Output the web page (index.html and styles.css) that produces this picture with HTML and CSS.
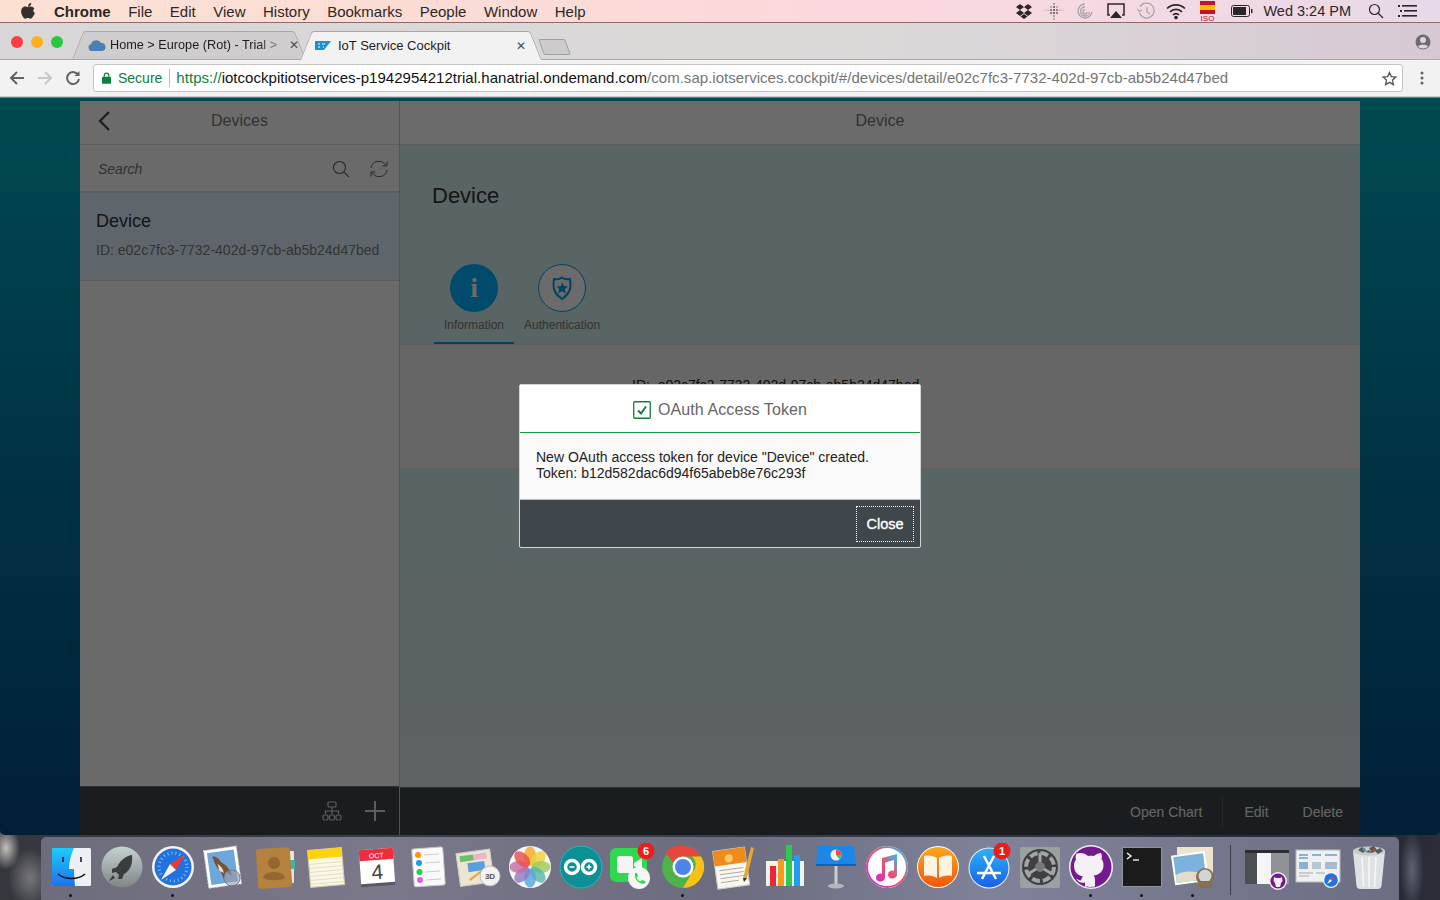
FILE: index.html
```html
<!doctype html>
<html>
  <head>
    <title>IoT Service Cockpit</title>
    <meta name="viewport" content="width=device-width,initial-scale=1.0"/>
    <meta charset="utf-8"/>
    <link rel="stylesheet" href="styles.css">
  </head>
  <body>
    <!-- mac menu bar -->
    <div class="menubar">
      <svg class="apple" width="14" height="16" viewBox="0 0 14 16"><path d="M10.2 0c.1 1-.3 1.900-.8 2.600-.6.700-1.500 1.200-2.400 1.100-.1-.9.300-1.900.8-2.500C8.400.5 9.400 0 10.200 0zM13.400 5.500c-1.600 1-1.400 3.500.5 4.400-.5 1.300-1 2.400-1.900 3.700-.7 1-1.500 2.100-2.600 2.100-1 0-1.300-.6-2.500-.6s-1.600.6-2.500.6c-1.100 0-1.800-1-2.500-2C.2 11.200-.7 7.400 1 5.200c.8-1.100 2-1.700 3.100-1.700 1.200 0 1.900.7 2.900.7.900 0 1.500-.7 2.900-.7 1.300 0 2.600.7 3.500 2z" fill="#332f2f"/></svg>
      <span class="menu-item appname">Chrome</span>
      <span class="menu-item">File</span>
      <span class="menu-item">Edit</span>
      <span class="menu-item">View</span>
      <span class="menu-item">History</span>
      <span class="menu-item">Bookmarks</span>
      <span class="menu-item">People</span>
      <span class="menu-item">Window</span>
      <span class="menu-item">Help</span>
      <div class="extras">
        <svg class="extra" viewBox="0 0 30 18"><path d="M11 2l4 3-4 3-4-3zM19 2l4 3-4 3-4-3zM11 8l4 3-4 3-4-3zM19 8l4 3-4 3-4-3zM15 12l3.500 2.400-3.500 2.600-3.500-2.600z" fill="#2a2728"/></svg>
        <svg class="extra" viewBox="0 0 30 18" fill="#555"><circle cx="15" cy="2" r=".8"/><circle cx="15" cy="5" r="1"/><circle cx="15" cy="8" r="1.100"/><circle cx="15" cy="11" r="1.100"/><circle cx="15" cy="14" r=".8"/><circle cx="15" cy="17" r=".7"/><circle cx="12" cy="5" r=".7"/><circle cx="12" cy="8" r=".9"/><circle cx="12" cy="11" r=".9"/><circle cx="18" cy="5" r=".7"/><circle cx="18" cy="8" r=".9"/><circle cx="18" cy="11" r=".9"/><circle cx="9" cy="8" r=".6"/><circle cx="21" cy="8" r=".6"/><circle cx="6" cy="8" r=".4"/><circle cx="24" cy="8" r=".4"/></svg>
        <svg class="extra spiral" viewBox="0 0 30 18" fill="none" stroke="#a9a2a8" stroke-width="1.300"><path d="M16 2a7 7 0 1 0 7 8"/><path d="M16 5a4.500 4.500 0 1 0 4.500 5"/><path d="M16 8a2 2 0 1 0 2 2"/></svg>
        <svg class="extra" viewBox="0 0 30 18"><path d="M9 13H7V2h16v11h-2" fill="none" stroke="#2a2728" stroke-width="1.500"/><path d="M15 9l6 7H9z" fill="#2a2728"/></svg>
        <svg class="extra" viewBox="0 0 30 18" fill="none" stroke="#a9a2a8" stroke-width="1.200"><path d="M9 5a7.500 7.500 0 1 1-.5 6"/><path d="M16 5v5l3 2"/><path d="M6.500 7l2 2.500L11 8" /></svg>
        <svg class="extra" viewBox="0 0 30 18" fill="none" stroke="#2a2728" stroke-width="1.700"><path d="M6 6.500a13 13 0 0 1 18 0"/><path d="M9 9.800a8.500 8.500 0 0 1 12 0"/><path d="M12 13a4 4 0 0 1 6 0"/><circle cx="15" cy="15.500" r="1" fill="#2a2728"/></svg>
        <svg class="extra flag" viewBox="0 0 30 22"><rect x="8" y="1" width="15" height="4" fill="#c8102e"/><rect x="8" y="5" width="15" height="5" fill="#f1bf00"/><rect x="8" y="10" width="15" height="4" fill="#c8102e"/><text x="15.500" y="21" class="flag-text">ISO</text></svg>
        <svg class="battery" width="22" height="12" viewBox="0 0 22 12"><rect x=".5" y=".5" width="18" height="11" rx="2" fill="none" stroke="#2a2728"/><rect x="2" y="2" width="13" height="8" fill="#2a2728"/><rect x="20" y="4" width="1.500" height="4" fill="#2a2728"/></svg>
        <span class="clock">Wed 3:24 PM</span>
        <svg class="spot" width="16" height="16" viewBox="0 0 16 16" fill="none" stroke="#2a2728" stroke-width="1.200"><circle cx="6.500" cy="6.500" r="5"/><path d="M10 10l5 5"/></svg>
        <svg class="notif" width="20" height="12" viewBox="0 0 20 12" fill="#2a2728"><rect x="0" y="0" width="2" height="2"/><rect x="4" y="0" width="15" height="1.600"/><rect x="2" y="5" width="2" height="2"/><rect x="6" y="5" width="13" height="1.600"/><rect x="0" y="10" width="2" height="2"/><rect x="4" y="10" width="15" height="1.600"/></svg>
      </div>
    </div>

    <div class="browser">
      <div class="tabstrip">
        <div class="lights">
          <span class="light red"></span><span class="light yellow"></span><span class="light green"></span>
        </div>
        <div class="tab">
          <svg width="18" height="12" viewBox="0 0 18 12"><path d="M4 12a3.500 3.500 0 0 1-.8-6.900A4 4 0 0 1 8 1.500a4.500 4.500 0 0 1 5 2.500 4 4 0 0 1 1 8z" fill="#4a7fb4"/></svg>
          <span class="tab-title fade">Home &gt; Europe (Rot) - Trial &gt;</span>
          <span class="tab-close">&#x2715;</span>
        </div>
        <div class="tab active">
          <svg width="16" height="9" viewBox="0 0 16 9"><path d="M0 0h16L9 9H0z" fill="#1d8fd8"/><path d="M3 3h2M3 6h2M7 3h3M8 6h1" stroke="#fff" stroke-width="1"/></svg>
          <span class="tab-title">IoT Service Cockpit</span>
          <span class="tab-close">&#x2715;</span>
        </div>
        <div class="newtab"></div>
        <svg class="profile" width="16" height="16" viewBox="0 0 16 16"><circle cx="8" cy="8" r="7.500" fill="#6f6b70"/><circle cx="8" cy="6" r="3" fill="#dcd6da"/><path d="M3 12.500c1-2.500 9-2.500 10 0-1 1-2.500 2-5 2s-4-1-5-2z" fill="#dcd6da"/></svg>
      </div>

      <div class="toolbar">
        <svg class="nav" width="16" height="14" viewBox="0 0 16 14" fill="none" stroke="#5f6368" stroke-width="2"><path d="M15 7H2M8 1L2 7l6 6"/></svg>
        <svg class="nav" width="16" height="14" viewBox="0 0 16 14" fill="none" stroke="#c9c9c9" stroke-width="2"><path d="M1 7h13M8 1l6 6-6 6"/></svg>
        <svg class="nav" width="16" height="16" viewBox="0 0 16 16" fill="none" stroke="#5f6368" stroke-width="2"><path d="M13.500 5.500A6 6 0 1 0 14 9"/><path d="M14.500 1v5h-5z" fill="#5f6368" stroke="none"/></svg>
        <div class="urlbar">
          <svg width="9" height="12" viewBox="0 0 10 13"><path d="M2.500 5V3.500a2.500 2.500 0 0 1 5 0V5" fill="none" stroke="#0b8043" stroke-width="1.400"/><rect y="5" width="10" height="8" rx="1" fill="#0b8043"/></svg>
          <span class="secure">Secure</span>
          <span class="url-sep"></span>
          <span class="url"><span class="scheme">https://</span><span class="host">iotcockpitiotservices-p1942954212trial.hanatrial.ondemand.com</span>/com.sap.iotservices.cockpit/#/devices/detail/e02c7fc3-7732-402d-97cb-ab5b24d47bed</span>
          <svg class="star" width="15" height="15" viewBox="0 0 16 16"><path d="M8 1.500l2 4.500 4.800.5-3.600 3.200 1 4.800L8 12.100l-4.200 2.400 1-4.800L1.200 6.500 6 6z" fill="none" stroke="#555" stroke-width="1.400"/></svg>
        </div>
        <svg class="dots" width="4" height="14" viewBox="0 0 4 14" fill="#5f6368"><circle cx="2" cy="2" r="1.500"/><circle cx="2" cy="7" r="1.500"/><circle cx="2" cy="12" r="1.500"/></svg>
      </div>

      <!-- web page -->
      <div class="page">
        <div class="app">
          <div class="master">
            <div class="bar-head">
              <svg class="back" width="12" height="20" viewBox="0 0 12 20" fill="none" stroke="#444" stroke-width="2.200"><path d="M11 1L2 10l9 9"/></svg>
              <span>Devices</span>
            </div>
            <div class="searchbar">
              <span class="search-text">Search</span>
              <svg width="18" height="18" viewBox="0 0 18 18" fill="none" stroke="#666" stroke-width="1.100"><circle cx="7.500" cy="7.500" r="6"/><path d="M12 12l5 5"/></svg>
              <svg width="20" height="20" viewBox="0 0 20 20" fill="none" stroke="#666" stroke-width="1"><path d="M2 9a8 8 0 0 1 14-4l2 2"/><path d="M18 2.500V7h-4.500"/><path d="M18 11a8 8 0 0 1-14 4l-2-2"/><path d="M2 17.500V13h4.500"/></svg>
            </div>
            <div class="list-item">
              <div class="item-title">Device</div>
              <div class="item-id">ID: e02c7fc3-7732-402d-97cb-ab5b24d47bed</div>
            </div>
            <div class="grow"></div>
            <div class="foot master-foot">
              <svg width="20" height="20" viewBox="0 0 20 20" fill="none" stroke="#dcdcdc" stroke-width="1.200"><rect x="6" y="1" width="8" height="5" rx="1"/><path d="M10 6v4M3.500 13v-3h13v3M10 10v3"/><rect x="1" y="14" width="5" height="5" rx="1.500"/><rect x="7.500" y="14" width="5" height="5" rx="1.500"/><rect x="14" y="14" width="5" height="5" rx="1.500"/></svg>
              <svg width="20" height="20" viewBox="0 0 20 20" fill="none" stroke="#dcdcdc" stroke-width="2"><path d="M10 0v20M0 10h20"/></svg>
            </div>
          </div>
          <div class="detail">
            <div class="bar-head"><span>Device</span></div>
            <div class="object-head">
              <h1 class="object-title">Device</h1>
              <div class="tabs">
                <div class="icon-tab selected">
                  <span class="tab-circle filled">i</span>
                  <span class="tab-label">Information</span>
                </div>
                <div class="icon-tab">
                  <span class="tab-circle">
                    <svg width="24" height="25" viewBox="0 0 24 25"><path d="M12 1.500c2 1.500 5 2 8 1.500 1 6 2 13-8 20C2 16 3 9 4 3c3 .5 6 0 8-1.500z" fill="none" stroke="#00a0e6" stroke-width="2"/><path d="M12 6l1.800 4 4.200.4-3.200 2.800 1 4.200-3.800-2.200-3.800 2.200 1-4.200L7 10.400l4.200-.4z" fill="#00a0e6"/></svg>
                  </span>
                  <span class="tab-label">Authentication</span>
                </div>
              </div>
            </div>
            <div class="form-band">
              <div class="form-row">ID:&nbsp; e02c7fc3-7732-402d-97cb-ab5b24d47bed</div>
            </div>
            <div class="detail-rest"></div>
            <div class="foot detail-foot">
              <span class="foot-btn">Open Chart</span>
              <span class="foot-sep"></span>
              <span class="foot-btn">Edit</span>
              <span class="foot-btn last">Delete</span>
            </div>
          </div>
        </div>

        <div class="blocklayer">
          <div class="dialog">
            <div class="dialog-head">
              <svg width="18" height="18" viewBox="0 0 18 18"><rect x=".75" y=".75" width="16.500" height="16.500" rx="1" fill="#fff" stroke="#107e3e" stroke-width="1.300"/><path d="M5 9.500l3 3 5-7" fill="none" stroke="#107e3e" stroke-width="2"/></svg>
              <span>OAuth Access Token</span>
            </div>
            <div class="dialog-body">New OAuth access token for device "Device" created.<br>Token: b12d582dac6d94f65abeb8e76c293f</div>
            <div class="dialog-foot"><button class="dialog-btn">Close</button></div>
          </div>
        </div>
      </div>
    </div>

    <!-- dock -->
    <div class="dock">
      <div class="dock-item running">
        <svg viewBox="0 0 48 48"><defs><linearGradient id="fb" x1="0" y1="0" x2="0" y2="1"><stop offset="0" stop-color="#1ecbfb"/><stop offset="1" stop-color="#1a73ee"/></linearGradient></defs><rect x="5" y="5" width="39" height="38" rx="1.500" fill="#eef1f4"/><path d="M6.500 5H27c-3 7-5 13-5 21h5c0 6 .500 11 1 17H6.500A1.500 1.500 0 0 1 5 41.500v-35A1.500 1.500 0 0 1 6.500 5z" fill="url(#fb)"/><path d="M16 14v5M34 14v5" stroke="#111" stroke-width="1.500"/><path d="M11 31c7 6 20 6 27 0" fill="none" stroke="#111" stroke-width="1.500"/></svg><span class="dot"></span>
      </div>
      <div class="dock-item">
        <svg viewBox="0 0 48 48"><defs><linearGradient id="lp" x1="0" y1="0" x2="0" y2="1"><stop offset="0" stop-color="#c6d2d2"/><stop offset="1" stop-color="#7f8584"/></linearGradient></defs><circle cx="24" cy="24" r="20.500" fill="url(#lp)"/><path d="M34 12c-7 1-12 6-15 12l-5 2 0 4 4-1 3 3-1 4 4 0 2-5c6-3 9-10 8-19z" fill="#3a3d3e"/><path d="M15 32l-4 6 6-3z" fill="#3a3d3e"/></svg><span class="dot"></span>
      </div>
      <div class="dock-item running">
        <svg viewBox="0 0 48 48"><circle cx="24" cy="24" r="21" fill="#f3f5f7"/><circle cx="24" cy="24" r="18.500" fill="#1f72e0"/><circle cx="24" cy="24" r="14" fill="none" stroke="#8cc0f2" stroke-dasharray="1 3" stroke-width="3"/><path d="M36 11L21 21l6 6z" fill="#ee3a32"/><path d="M12 37l15-10-6-6z" fill="#f4f4f4"/></svg><span class="dot"></span>
      </div>
      <div class="dock-item">
        <svg viewBox="0 0 48 48"><g transform="rotate(-8 24 24)"><rect x="6" y="5" width="33" height="38" fill="#fff" stroke="#ccc" stroke-dasharray="2 1.500"/><rect x="9" y="8" width="27" height="32" fill="#6ea7dc"/><path d="M14 12c4 0 6 3 8 7 4 3 8 8 9 15l-6-5-3 7-2-9c-4-3-5-9-6-15z" fill="#7b5232"/><path d="M18 20c3 3 5 6 5 10l-4-3z" fill="#e9dfcf"/></g><circle cx="32" cy="35" r="8" fill="#9a9ba8" fill-opacity=".6" stroke="#777a88"/></svg><span class="dot"></span>
      </div>
      <div class="dock-item">
        <svg viewBox="0 0 48 48"><rect x="38" y="8" width="5" height="32" rx="1" fill="#e8e6d8"/><rect x="39" y="17" width="5" height="9" fill="#3fb5a8"/><rect x="6" y="5" width="34" height="40" rx="3" fill="#b5813f" transform="rotate(-4 24 24)"/><circle cx="23" cy="20" r="6" fill="#946731"/><path d="M12 35c1-8 21-8 22 0-6 3-16 3-22 0z" fill="#946731"/></svg><span class="dot"></span>
      </div>
      <div class="dock-item">
        <svg viewBox="0 0 48 48"><g transform="rotate(-5 24 24)"><rect x="7" y="6" width="34" height="37" fill="#fbf7e3" stroke="#cfc9a8"/><rect x="7" y="6" width="34" height="9" fill="#fdd20e"/><path d="M7 20h34M7 24h34M7 28h34M7 32h34M7 36h34M7 40h34" stroke="#dcd7c0" stroke-width=".8"/></g></svg><span class="dot"></span>
      </div>
      <div class="dock-item">
        <svg viewBox="0 0 48 48"><g transform="rotate(-4 24 24)"><rect x="7" y="7" width="34" height="36" fill="#555b60"/><rect x="7" y="6" width="34" height="34" fill="#fff"/><rect x="7" y="6" width="34" height="11" fill="#ec2e3c"/><text x="24" y="15" class="cal-month">OCT</text><text x="24" y="36" class="cal-day">4</text></g></svg><span class="dot"></span>
      </div>
      <div class="dock-item">
        <svg viewBox="0 0 48 48"><rect x="9" y="5" width="31" height="38" rx="2" fill="#fafafa" stroke="#c8c8c8" transform="rotate(-4 24 24)"/><circle cx="14" cy="12" r="3" fill="#ff9500"/><circle cx="15" cy="20" r="3" fill="#1a9cf0"/><circle cx="15.500" cy="29" r="3" fill="#2ecc40"/><circle cx="16" cy="37" r="3" fill="#e05de0"/><path d="M20 12l15-1M21 20l15-1M21 29l15-1M22 37l15-1" stroke="#ccc"/></svg><span class="dot"></span>
      </div>
      <div class="dock-item">
        <svg viewBox="0 0 48 48"><g transform="rotate(-8 22 24)"><rect x="3" y="8" width="34" height="33" fill="#ece5d2" stroke="#ccc"/><rect x="6" y="11" width="14" height="6" fill="#6cc06a"/><rect x="20" y="11" width="13" height="6" fill="#e9b7c5"/><rect x="13" y="19" width="17" height="9" fill="#5a9fdc"/><path d="M13 36l14-8" stroke="#e8a23a" stroke-width="2"/></g><circle cx="35" cy="33" r="10" fill="#f2f2f0" stroke="#bbb"/><text x="35" y="36" class="maps-3d">3D</text></svg><span class="dot"></span>
      </div>
      <div class="dock-item">
        <svg viewBox="0 0 48 48"><circle cx="24" cy="24" r="21" fill="#f7f7f7"/><g fill-opacity=".82"><ellipse cx="24" cy="13" rx="6" ry="9.500" fill="#f7a823"/><ellipse cx="24" cy="13" rx="6" ry="9.500" fill="#ecd334" transform="rotate(45 24 24)"/><ellipse cx="24" cy="13" rx="6" ry="9.500" fill="#9bcb5a" transform="rotate(90 24 24)"/><ellipse cx="24" cy="13" rx="6" ry="9.500" fill="#5bb6a8" transform="rotate(135 24 24)"/><ellipse cx="24" cy="13" rx="6" ry="9.500" fill="#56a6e0" transform="rotate(180 24 24)"/><ellipse cx="24" cy="13" rx="6" ry="9.500" fill="#8e7ac6" transform="rotate(225 24 24)"/><ellipse cx="24" cy="13" rx="6" ry="9.500" fill="#c66ea6" transform="rotate(270 24 24)"/><ellipse cx="24" cy="13" rx="6" ry="9.500" fill="#ea4d4d" transform="rotate(315 24 24)"/></g></svg><span class="dot"></span>
      </div>
      <div class="dock-item">
        <svg viewBox="0 0 48 48"><circle cx="24" cy="24" r="21.500" fill="#0d8f96"/><circle cx="24" cy="24" r="21" fill="none" stroke="#3db0b5"/><g fill="none" stroke="#fff" stroke-width="3.500"><circle cx="15" cy="24" r="6.500"/><circle cx="32" cy="24" r="6.500"/></g><path d="M12.500 24h5M29.500 24h5M32 21.500v5" stroke="#fff" stroke-width="1.500"/></svg><span class="dot"></span>
      </div>
      <div class="dock-item">
        <svg viewBox="0 0 48 48"><rect x="2" y="5" width="37" height="34" rx="6" fill="#2fd94f"/><rect x="9" y="13" width="16" height="17" rx="3" fill="#f4f4f4"/><path d="M26 20l8-5v13l-8-5z" fill="#f4f4f4"/><circle cx="31" cy="35" r="11" fill="#f6f6f6"/><path d="M27 29l2 1 1 3-1.500 1.500c.8 2 2 3 4 4l1.500-1.500 3 1 .5 2c-4 3-13-3-10-11z" fill="#2fd94f"/><circle cx="38" cy="8" r="8.500" fill="#ef1c1c"/><text x="38" y="12" class="badge">6</text></svg><span class="dot"></span>
      </div>
      <div class="dock-item running">
        <svg viewBox="0 0 48 48"><circle cx="24" cy="24" r="21" fill="#4db34a"/><path d="M24 3a21 21 0 0 1 18.200 10.500H24a10.500 10.500 0 0 0-9.500 6L6 9A21 21 0 0 1 24 3z" fill="#e8453c"/><path d="M42.200 13.500A21 21 0 0 1 24 45l9-15.500a10.500 10.500 0 0 0 0-16z" fill="#fbc116"/><circle cx="24" cy="24" r="10.500" fill="#fff"/><circle cx="24" cy="24" r="8" fill="#4a86e8"/></svg><span class="dot"></span>
      </div>
      <div class="dock-item">
        <svg viewBox="0 0 48 48"><g transform="rotate(-8 22 24)"><rect x="5" y="6" width="32" height="38" fill="#fbf7ee" stroke="#ccc"/><rect x="5" y="6" width="32" height="15" fill="#f08a1d"/><path d="M9 26h24M9 30h24M9 34h24M9 38h18" stroke="#aaa"/><circle cx="20" cy="15" r="4" fill="#f7c969"/></g><path d="M41 4l3 1-7 30-3 4-1-4z" fill="#e7a72d"/><path d="M33 35l1 4 3-4z" fill="#333"/></svg><span class="dot"></span>
      </div>
      <div class="dock-item">
        <svg viewBox="0 0 48 48"><path d="M5 40h38v3H5z" fill="#bbb"/><rect x="5" y="18" width="38" height="25" fill="#f4f1e6"/><rect x="9" y="23" width="6" height="20" fill="#f0243c"/><rect x="17" y="16" width="6" height="27" fill="#f29b1d"/><rect x="25" y="2" width="6" height="41" fill="#2ccb4f"/><rect x="33" y="12" width="6" height="31" fill="#1d9ef0"/></svg><span class="dot"></span>
      </div>
      <div class="dock-item">
        <svg viewBox="0 0 48 48"><path d="M6 3h36l2 18H4z" fill="#1d87e8"/><path d="M4 21h40v2H4z" fill="#0f62b8"/><rect x="22.500" y="23" width="3" height="20" fill="#c7ced2"/><ellipse cx="24" cy="43" rx="8" ry="2.500" fill="#aeb8bd"/><circle cx="24" cy="12" r="5.500" fill="#f5f5f5"/><path d="M24 12V6.500a5.500 5.500 0 0 1 5.500 5.500z" fill="#ef4f48"/><path d="M24 12h5.500a5.500 5.500 0 0 1-2 4.200z" fill="#4cc04f"/></svg><span class="dot"></span>
      </div>
      <div class="dock-item">
        <svg viewBox="0 0 48 48"><defs><linearGradient id="it" x1="0" y1="1" x2="1" y2="0"><stop offset="0" stop-color="#c52fd0"/><stop offset=".5" stop-color="#f54a6e"/><stop offset="1" stop-color="#28c4ea"/></linearGradient></defs><circle cx="24" cy="24" r="21" fill="#fff"/><circle cx="24" cy="24" r="20" fill="none" stroke="url(#it)" stroke-width="2"/><path d="M19 15l15-4v20.500a4.500 4 0 1 1-3-3.700V17l-9 2.500v15a4.500 4 0 1 1-3-3.700z" fill="url(#it)"/></svg><span class="dot"></span>
      </div>
      <div class="dock-item">
        <svg viewBox="0 0 48 48"><defs><linearGradient id="ib" x1="0" y1="0" x2="0" y2="1"><stop offset="0" stop-color="#fba71b"/><stop offset="1" stop-color="#f2560a"/></linearGradient></defs><circle cx="24" cy="24" r="21" fill="#fff"/><circle cx="24" cy="24" r="20" fill="url(#ib)"/><path d="M23 15c-3-2-8-3-13-2v20c5-1 10 0 13 2zM25 15c3-2 8-3 13-2v20c-5-1-10 0-13 2z" fill="#fdf3e3"/></svg><span class="dot"></span>
      </div>
      <div class="dock-item">
        <svg viewBox="0 0 48 48"><defs><linearGradient id="as" x1="0" y1="0" x2="0" y2="1"><stop offset="0" stop-color="#29b3f8"/><stop offset="1" stop-color="#1b5ee8"/></linearGradient></defs><circle cx="24" cy="25" r="20.500" fill="#f2f2f2"/><circle cx="24" cy="25" r="19.500" fill="url(#as)"/><path d="M17 36l12-23M31 36L19 13M12 30h24" stroke="#fff" stroke-width="2.500" fill="none"/><circle cx="37" cy="8" r="8.500" fill="#ef1c1c"/><text x="37" y="12" class="badge">1</text></svg><span class="dot"></span>
      </div>
      <div class="dock-item">
        <svg viewBox="0 0 48 48"><rect x="4" y="4" width="40" height="41" rx="2" fill="#9aa1a1"/><circle cx="24" cy="24" r="18" fill="#3f4042"/><circle cx="24" cy="24" r="14" fill="none" stroke="#a3a5a6" stroke-width="4" stroke-dasharray="8 3"/><circle cx="24" cy="24" r="5" fill="#77797a"/><path d="M24 10v9M12 31l8-5M36 31l-8-5" stroke="#a3a5a6" stroke-width="3"/></svg><span class="dot"></span>
      </div>
      <div class="dock-item running">
        <svg viewBox="0 0 48 48"><circle cx="24" cy="24" r="22" fill="#f2eef2"/><circle cx="24" cy="24" r="20.500" fill="#741a8e"/><path d="M14 10c2 0 5 1 7 3 2-.5 4-.5 6 0 2-2 5-3 7-3 1 2 1.200 4 .5 6 1.500 2 2 4 2 6 0 7-5 10-10 10.500 1 1 1.500 2.500 1.500 4v7c-1 .5-9 .5-10 0v-4c-4 1-7-.5-9-4 2 1 4 2 5 2 .5-2 1-3 2-4-5-1-9-4-9-11 0-2 .5-4 2-6-.7-2-.5-4 .5-6z" fill="#f5f0f5"/></svg><span class="dot"></span>
      </div>
      <div class="dock-item running">
        <svg viewBox="0 0 48 48"><rect x="4" y="4" width="40" height="40" fill="#8d9597"/><rect x="5" y="5" width="38" height="38" fill="#1b1b1b"/><path d="M9 10l4 3-4 3" fill="none" stroke="#fff" stroke-width="1.300"/><path d="M15 17h6" stroke="#fff" stroke-width="1.300"/></svg><span class="dot"></span>
      </div>
      <div class="dock-item running">
        <svg viewBox="0 0 48 48"><rect x="8" y="4" width="36" height="30" fill="#ece4cf"/><g transform="rotate(-8 22 26)"><rect x="4" y="10" width="34" height="30" fill="#fff"/><rect x="6" y="12" width="30" height="26" fill="#7cb2dc"/><path d="M6 30c8-4 18-2 30 3v5H6z" fill="#e3dccb"/></g><circle cx="36" cy="34" r="9" fill="#8a6f4f"/><circle cx="36" cy="33" r="6.500" fill="#cfd6d8"/><rect x="29" y="38" width="14" height="7" rx="2" fill="#8a6f4f"/></svg><span class="dot"></span>
      </div>
      <span class="dock-sep"></span>
      <div class="dock-item">
        <svg viewBox="0 0 48 48"><rect x="2" y="7" width="44" height="34" fill="#4b4f52"/><rect x="2" y="7" width="44" height="3" fill="#2c2f31"/><rect x="14" y="10" width="14" height="31" fill="#f5f5f5"/><rect x="28" y="10" width="18" height="31" fill="#8f9396"/><circle cx="35" cy="38" r="9" fill="#f2eef2"/><circle cx="35" cy="38" r="7.500" fill="#741a8e"/><path d="M31 34l2 1h4l2-1 .5 4-1.500 2-1 4h-4l-1-4-1.500-2z" fill="#f5f0f5"/></svg><span class="dot"></span>
      </div>
      <div class="dock-item">
        <svg viewBox="0 0 48 48"><rect x="2" y="7" width="44" height="32" fill="#eef0f2" stroke="#bbb"/><path d="M5 12h9M5 15h9M18 12h9M31 12h12" stroke="#6a9fc8" stroke-width="1.500"/><rect x="5" y="19" width="9" height="7" fill="#8cb1cf"/><rect x="18" y="19" width="9" height="7" fill="#b8c7d2"/><rect x="31" y="19" width="12" height="7" fill="#a9bccb"/><path d="M5 30h14M5 33h10M22 30h9" stroke="#a7a7a7"/><circle cx="37" cy="37" r="8" fill="#f4f5f7"/><circle cx="37" cy="37" r="6.800" fill="#1f72e0"/><path d="M41 33l-5 3 2 2z" fill="#ee3a32"/><path d="M33 41l5-3-2-2z" fill="#f4f4f4"/></svg><span class="dot"></span>
      </div>
      <div class="dock-item">
        <svg viewBox="0 0 48 48"><path d="M8 8h32l-3.500 35c-.3 2-2 3-3.500 3H15c-1.500 0-3.200-1-3.500-3z" fill="#dfe2e3"/><ellipse cx="24" cy="8" rx="16" ry="4.500" fill="#c9cccd"/><path d="M13 7l4-3 4 3-3 3zM24 5l5-2 3 4-5 3zM30 8l5-3 3 3-5 3zM20 9l4-2 3 3z" fill="#55595c"/><circle cx="19" cy="6" r="1.500" fill="#35a8a0"/><circle cx="29" cy="7" r="1.500" fill="#b04a32"/><path d="M17 14l1.500 30M24 14v30M31 14l-1.500 30" stroke="#f7f7f7" stroke-width="1.500"/></svg><span class="dot"></span>
      </div>
    </div>
  </body>
</html>
```

FILE: styles.css
```css
*{
  box-sizing:border-box;
}
html,body{
  margin:0;
  padding:0;
  height:100%;
}
body{
  width:1440px;
  height:900px;
  overflow:hidden;
  display:flex;
  flex-direction:column;
  font-family:"Liberation Sans",Arial,sans-serif;
  background:
    radial-gradient(ellipse 14px 22px at 6px 848px,#c4c0bc,transparent),
    radial-gradient(ellipse 22px 30px at 30px 878px,#77777a,transparent),
    radial-gradient(ellipse 12px 40px at 1412px 870px,#5d6270,transparent),
    linear-gradient(100deg,#47474b 0,#35353a 3%,#38404e 50%,#272a33 96%,#2b2e38 100%);
}

/* menu bar */
.menubar{
  height:23px;
  flex:none;
  display:flex;
  align-items:center;
  padding-left:21px;
  font-size:15px;
  color:#2c2728;
  background:linear-gradient(90deg,#fce0d2 0,#fbdcd6 35%,#fbd8de 60%,#f4d9e3 80%,#e6d9e8 100%);
  border-bottom:1px solid #8e6a6a;
}
.apple{
  margin-right:19px;
}
.menu-item{
  margin-right:17.5px;
}
.appname{
  font-weight:bold;
}
.extras{
  margin-left:auto;
  display:flex;
  align-items:center;
}
.extra{
  width:30px;
  height:18px;
}
.spiral{
  margin-right:2px;
}
.flag{
  height:22px;
  margin-left:1px;
}
.flag-text{
  font-size:8px;
  fill:#c8102e;
  text-anchor:middle;
}
.battery{
  margin:0 10px 0 9px;
}
.clock{
  font-size:14.5px;
  margin-right:17px;
}
.spot{
  margin-right:14px;
}
.notif{
  margin-right:22px;
}

/* browser window */
.browser{
  height:812px;
  flex:none;
  display:flex;
  flex-direction:column;
  border-radius:0 0 5px 5px;
  overflow:hidden;
}
.tabstrip{
  height:37px;
  flex:none;
  display:flex;
  align-items:flex-end;
  padding-left:11px;
  background:linear-gradient(90deg,#d8d6d6 0,#dcd9d9 60%,#d6c9d4 100%);
  border-bottom:1px solid #aaa8a8;
}
.lights{
  display:flex;
  gap:8px;
  align-self:flex-start;
  margin-top:13px;
  width:61px;
  flex:none;
}
.light{
  width:12px;
  height:12px;
  border-radius:50%;
}
.red{background:#fc3d44;}
.yellow{background:#fdb11f;}
.green{background:#2ac73f;}
.tab{
  position:relative;
  width:234px;
  flex:none;
  height:28px;
  margin-right:-6px;
  padding:0 7px 0 16px;
  display:flex;
  align-items:center;
  gap:4px;
  font-size:13px;
  color:#1d1d1d;
}
.tab::before,.tab::after{
  content:"";
  position:absolute;
  top:0;
  bottom:0;
  width:50%;
  z-index:0;
  background:#cfcdcd;
  border-top:1px solid #a8a6a6;
}
.tab::before{
  left:0;
  border-left:1px solid #a8a6a6;
  border-radius:3px 0 0 0;
  transform-origin:bottom left;
  transform:skewX(-22deg);
}
.tab::after{
  right:0;
  border-right:1px solid #a8a6a6;
  border-radius:0 3px 0 0;
  transform-origin:bottom right;
  transform:skewX(22deg);
}
.tab>*{
  position:relative;
  z-index:1;
}
.tab.active{
  z-index:2;
  width:241px;
  height:29px;
  margin-right:0;
  margin-bottom:-1px;
  padding-left:15px;
  padding-right:15px;
  gap:7px;
}
.tab.active::before,.tab.active::after{
  background:#f2f2f2;
}
.tab-title{
  flex:1;
  white-space:nowrap;
  overflow:hidden;
}
.fade{
  font-size:12.7px;
  -webkit-mask-image:linear-gradient(90deg,#000 84%,#0005 97%);
  mask-image:linear-gradient(90deg,#000 84%,#0005 97%);
}
.tab-close{
  font-size:12px;
  color:#4d4d4d;
}
.newtab{
  width:27px;
  height:16px;
  margin:0 0 4px 0;
  background:#cdcbcb;
  border:1px solid #a0a0a0;
  border-radius:2px;
  transform:skewX(20deg);
}
.profile{
  margin-left:auto;
  margin-right:9px;
  align-self:flex-start;
  margin-top:11px;
}

.toolbar{
  height:37px;
  flex:none;
  display:flex;
  align-items:center;
  padding-left:9px;
  background:#f2f2f2;
  border-bottom:1px solid #c9c9c9;
}
.nav{
  margin-right:12px;
  flex:none;
}
.urlbar{
  width:1310px;
  flex:none;
  height:28px;
  display:flex;
  align-items:center;
  padding:0 5px 0 8px;
  background:#fff;
  border:1px solid #c4c4c4;
  border-radius:3px;
  font-size:14px;
  white-space:nowrap;
}
.secure{
  color:#0b8043;
  margin-left:7px;
}
.url-sep{
  width:1px;
  height:18px;
  margin:0 6px 0 7px;
  background:#bdbdbd;
}
.url{
  flex:1;
  padding-bottom:2px;
  font-size:15px;
  letter-spacing:.03px;
  color:#757575;
}
.scheme{
  color:#0b8043;
}
.host{
  color:#111;
}
.dots{
  margin-left:17px;
}

/* page */
.page{
  flex:1;
  position:relative;
  display:flex;
  justify-content:center;
  min-height:0;
  padding-top:3px;
  background:linear-gradient(180deg,#00b0be 0,#0078a0 50%,#054a85 100%);
  border-top:1px solid #0296ff;
}
.app{
  width:1280px;
  display:flex;
  color:#555;
}
.master{
  width:320px;
  flex:none;
  display:flex;
  flex-direction:column;
  background:#fcfcfc;
  border-right:1px solid #c8c8c8;
}
.detail{
  flex:1;
  display:flex;
  flex-direction:column;
  background:#d4eeee;
}
.bar-head{
  height:44px;
  flex:none;
  position:relative;
  display:flex;
  align-items:center;
  justify-content:center;
  padding-bottom:4px;
  font-size:16px;
  color:#777;
  background:#fff;
  border-bottom:1px solid #ddd;
}
.back{
  position:absolute;
  left:18px;
  top:10px;
}
.searchbar{
  height:48px;
  flex:none;
  display:flex;
  align-items:center;
  padding:2px 10px 0 18px;
  gap:19px;
  background:#fcfcfc;
  border-bottom:2px solid #dcdcdc;
}
.search-text{
  flex:1;
  font-size:14px;
  font-style:italic;
  color:#777;
}
.list-item{
  height:88px;
  flex:none;
  padding:17px 16px 0;
  background:#e0f3ff;
  border-bottom:1px solid #d8d8d8;
}
.item-title{
  font-size:18px;
  line-height:23px;
  color:#333;
}
.item-id{
  margin-top:8px;
  font-size:14px;
  line-height:18px;
  color:#7c7c7c;
}
.grow{
  flex:1;
}
.foot{
  height:49px;
  flex:none;
  display:flex;
  align-items:center;
  justify-content:flex-end;
  background:#3f474d;
  border-top:1px solid #6a7378;
}
.master-foot{
  gap:23px;
  padding-right:14px;
}
.object-head{
  height:199px;
  flex:none;
  display:flex;
  flex-direction:column;
  padding:37px 0 0 32px;
}
.object-title{
  margin:0;
  font-size:22px;
  line-height:28px;
  font-weight:normal;
  color:#333;
}
.tabs{
  display:flex;
  margin:54px 0 0 2px;
}
.icon-tab{
  display:flex;
  flex-direction:column;
  align-items:center;
  padding:0 10px;
  height:80px;
}
.icon-tab.selected{
  border-bottom:2px solid #00a0e6;
}
.tab-circle{
  width:48px;
  height:48px;
  border-radius:50%;
  border:1px solid #00a0e6;
  background:#fff;
  display:flex;
  align-items:center;
  justify-content:center;
}
.tab-circle.filled{
  background:#00b0ff;
  border:none;
  font:bold 28px "Liberation Serif",serif;
  color:#fff;
}
.tab-label{
  margin-top:5px;
  font-size:12px;
  line-height:16px;
  color:#777;
}
.form-band{
  height:125px;
  flex:none;
  padding-top:31px;
  padding-left:232px;
  background:#f3f3f3;
  border-top:1px solid #ddd;
  border-bottom:1px solid #e6e6e6;
}
.form-row{
  font-size:14px;
  line-height:18px;
  color:#222;
}
.detail-rest{
  flex:1;
  background:linear-gradient(180deg,#d4eeee,#e0ecec);
}
.detail-foot{
  height:48px;
  padding-right:17px;
  font-size:14px;
  color:#f0f0f0;
}
.foot-btn{
  margin-left:33px;
}
.foot-btn.last{
  margin-left:34px;
}
.foot-sep{
  width:1px;
  height:32px;
  margin-left:20px;
  margin-right:-12px;
  background:#5a6267;
}

/* dialog */
.blocklayer{
  position:absolute;
  inset:0;
  display:flex;
  align-items:center;
  justify-content:center;
  background:rgba(0,0,0,.58);
}
.dialog{
  width:402px;
  height:164px;
  margin-bottom:2px;
  display:flex;
  flex-direction:column;
  background:#fafafa;
  border:1px solid #d4d4d4;
  border-radius:2px;
  overflow:hidden;
}
.dialog-head{
  height:48px;
  flex:none;
  display:flex;
  align-items:center;
  justify-content:center;
  gap:7px;
  padding-top:4px;
  font-size:16px;
  letter-spacing:.1px;
  color:#666;
  background:#fff;
  border-bottom:1px solid #159a4c;
}
.dialog-body{
  flex:1;
  padding:16px 16px 0;
  font-size:14px;
  line-height:16px;
  color:#222;
}
.dialog-foot{
  height:48px;
  flex:none;
  display:flex;
  align-items:center;
  justify-content:flex-end;
  padding:2px 6px 0 0;
  background:#3f474d;
  border-top:1px solid #bbb;
}
.dialog-btn{
  width:58px;
  height:36px;
  padding:0;
  font:normal 14.5px "Liberation Sans",Arial,sans-serif;
  -webkit-text-stroke:.35px #fff;
  color:#fff;
  background:transparent;
  border:1px dotted #fff;
}

/* dock */
.dock{
  width:1358px;
  height:63px;
  margin:2px 0 0 41px;
  padding-left:4px;
  display:flex;
  background:linear-gradient(90deg,#6d6c7c 0,#7a788a 25%,#6b6c7e 50%,#7f8299 70%,#6c6e82 100%);
  border-radius:5px 5px 0 0;
}
.dock-item{
  width:51px;
  flex:none;
  padding-top:6px;
  display:flex;
  flex-direction:column;
  align-items:center;
}
.dock-item svg{
  width:48px;
  height:48px;
  flex:none;
}
.dot{
  width:3px;
  height:3px;
  margin-top:3px;
  border-radius:50%;
}
.running .dot{
  background:#111;
}
.dock-sep{
  width:1px;
  height:50px;
  margin:8px 10px 0 12px;
  flex:none;
  background:#3c3c48;
}
.cal-month{
  font-size:7px;
  fill:#fff;
  text-anchor:middle;
}
.cal-day{
  font-size:21px;
  fill:#444;
  text-anchor:middle;
}
.maps-3d{
  font-size:8px;
  font-weight:bold;
  fill:#555;
  text-anchor:middle;
}
.badge{
  font-size:11px;
  font-weight:bold;
  fill:#fff;
  text-anchor:middle;
}
```
